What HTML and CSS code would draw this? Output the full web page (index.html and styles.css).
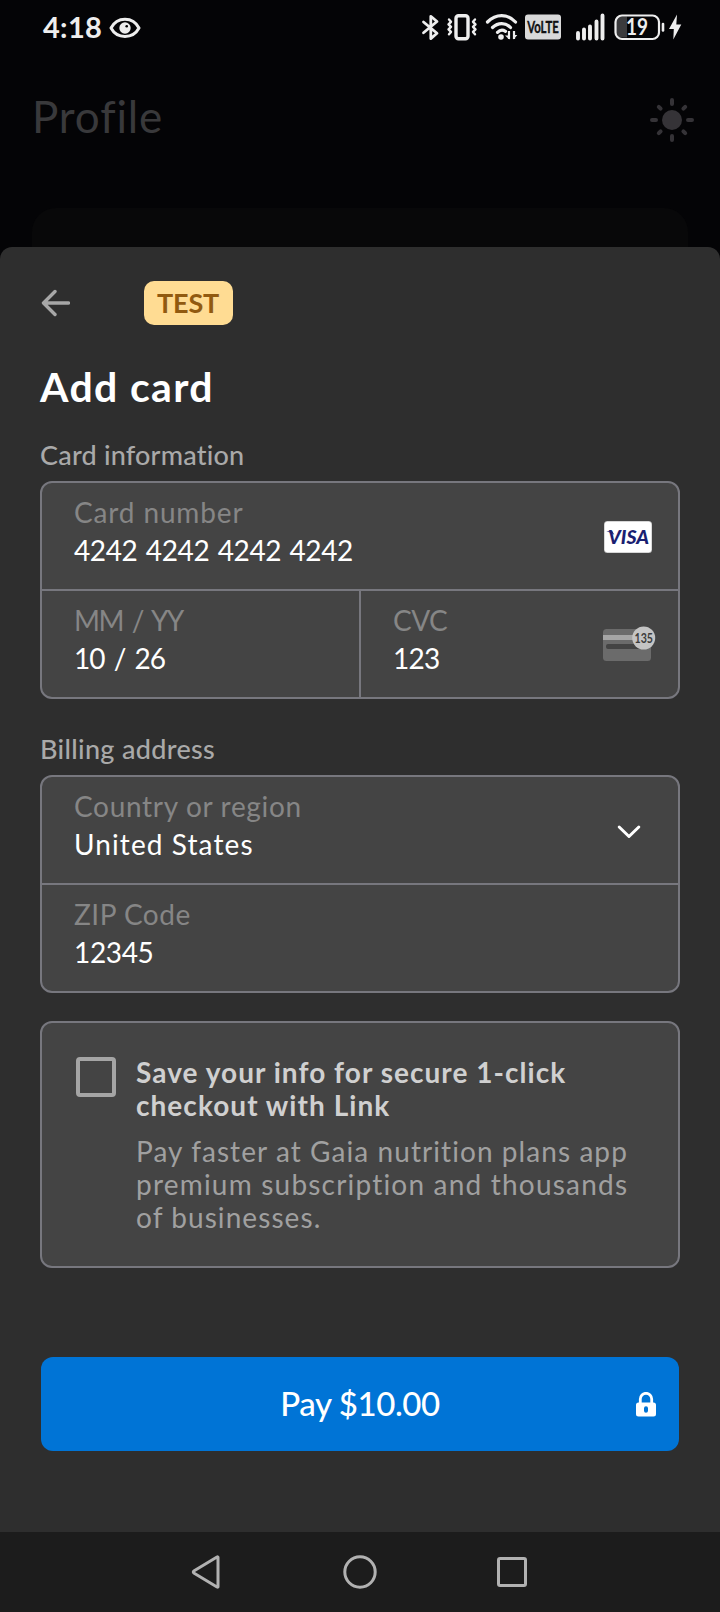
FILE: index.html
```html
<!DOCTYPE html>
<html lang="en">
<head>
<meta charset="utf-8">
<title>Add card</title>
<link rel="stylesheet" href="styles.css">
</head>
<body>
<div class="screen">
  <div class="backdrop">
    <div class="status">
      <span class="clock">4:18</span>
      <svg class="eye" width="32" height="22" viewBox="0 0 32 22"><path d="M2 11C8-.8 24-.8 30 11 24 22.200 8 22.200 2 11Z" fill="none" stroke="#eee" stroke-width="3" stroke-linejoin="round"/><circle cx="16" cy="11" r="5.700" fill="#eee"/><circle cx="17.700" cy="9.300" r="1.300" fill="#040406"/></svg>
      <svg class="indicators" width="290" height="30" viewBox="0 0 290 30">
        <g fill="none" stroke="#eee" stroke-linecap="round" stroke-linejoin="round">
          <path d="M3.500 10 17 21.300 10.800 26.600V4.300L17 9.500 3.500 20.800" stroke-width="2.800"/>
          <rect x="36" y="3.700" width="12" height="23" rx="2.500" stroke-width="3.400"/>
          <path d="M29 7.500l2 2.300-2.500 2.500 2.500 2.600-2.500 2.500 2.500 2.500-2 2.400M55 7.500l-2 2.300 2.500 2.500-2.500 2.600 2.500 2.500-2.500 2.500 2 2.400" stroke-width="2.400"/>
          <path d="M67.500 10c8.500-8.500 20-8.500 28 0M72.500 15.500c5.500-5.300 13-5.300 18 0M77.500 20.300c2.500-2.500 5-2.800 8-1" stroke-width="3.200"/>
        </g>
        <circle cx="81" cy="25" r="2.800" fill="#eee"/>
        <path d="M89 19v8M94 19v8" stroke="#eee" stroke-width="2.200"/>
        <path d="M85 23.500h4.500v4zM93.500 27.500v-4.500h3.800z" fill="#eee"/>
        <rect x="105" y="2.500" width="36" height="25" rx="3" fill="#d9d9d9"/>
        <text x="107.300" y="20.500" class="volte" textLength="31.500" lengthAdjust="spacingAndGlyphs">VoLTE</text>
        <path d="M158 21v5.500M164 17.500v9M170 14.500v12M176.500 9.500v17M182.500 3.500v23" stroke="#eee" stroke-width="3.900" stroke-linecap="round"/>
        <path d="M207 4.500h-6q-5 0-5 5v11q0 5 5 5h6z" fill="#3b3b3d"/>
        <rect x="195.500" y="3.500" width="43.500" height="23.500" rx="6.500" fill="none" stroke="#eee" stroke-width="2.200"/>
        <text x="206" y="22.500" class="charge" textLength="22" lengthAdjust="spacingAndGlyphs">19</text>
        <path d="M243 12v6.500" stroke="#eee" stroke-width="2.600" stroke-linecap="round"/>
        <path d="M257 2.500 249 17h4.800L253.300 27.500 261.300 12.600h-5z" fill="#eee"/>
      </svg>
    </div>
    <div class="profile-bar">
      <span class="profile">Profile</span>
      <svg width="44" height="44" viewBox="0 0 44 44"><circle cx="22" cy="22" r="10" fill="#353337"/><path d="M22 2v4M22 38v4M2 22h4M38 22h4M8.800 8.800l1.800 1.800M33.400 33.400l1.800 1.800M8.800 35.200l1.800-1.800M33.400 10.600l1.800-1.800" stroke="#353337" stroke-width="4" stroke-linecap="round"/></svg>
    </div>
    <div class="dim-card"></div>
  </div>

  <main class="sheet">
    <header class="top">
      <svg width="30" height="28" viewBox="0 0 30 28"><path d="M15 2.500 3.500 14 15 25.500M4 14h24.500" fill="none" stroke="#a7a7a7" stroke-width="3.400" stroke-linecap="round" stroke-linejoin="round"/></svg>
      <span class="badge">TEST</span>
    </header>
    <h1 class="title">Add card</h1>

    <h2 class="section ls-info">Card information</h2>
    <section class="card">
      <div class="field">
        <div class="texts"><span class="label ls-number">Card number</span><span class="value ls-digits">4242 4242 4242 4242</span></div>
        <svg class="brand" width="48" height="32" viewBox="0 0 48 32"><rect width="48" height="32" rx="3.500" fill="#c9c9c9"/><rect x=".7" y=".7" width="46.600" height="30.600" rx="3" fill="#fff"/><text x="4" y="22.700" class="visa" textLength="41" lengthAdjust="spacingAndGlyphs">VISA</text><path d="M2.300 10.200h6l2 3.500-3-1.800z" fill="#1a1f71"/></svg>
      </div>
      <div class="pair">
        <div class="field">
          <div class="texts"><span class="label ls-expiry">MM / YY</span><span class="value ls-date">10 / 26</span></div>
        </div>
        <div class="field">
          <div class="texts"><span class="label ls-cvc">CVC</span><span class="value ls-code">123</span></div>
          <svg class="cvc" width="53" height="36" viewBox="0 0 53 36"><rect y="3" width="48" height="32" rx="3.500" fill="#6b6b6b"/><path d="M0 9h48v5H0z" fill="#a5a5a5"/><rect x="3" y="18" width="38" height="5" rx="2" fill="#444"/><circle cx="40.700" cy="12" r="11.500" fill="#c4c4c4"/><text x="31.500" y="16.600" class="digits" textLength="18.500" lengthAdjust="spacingAndGlyphs">135</text></svg>
        </div>
      </div>
    </section>

    <h2 class="section billing">Billing address</h2>
    <section class="card">
      <div class="field">
        <div class="texts"><span class="label ls-country">Country or region</span><span class="value ls-states">United States</span></div>
        <svg class="chevron" width="24" height="16" viewBox="0 0 24 16"><path d="M2.200 3 12 12.500 21.800 3" fill="none" stroke="#fff" stroke-width="3" stroke-linecap="round" stroke-linejoin="round"/></svg>
      </div>
      <div class="field zip">
        <div class="texts"><span class="label ls-zip">ZIP Code</span><span class="value ls-zipcode">12345</span></div>
      </div>
    </section>

    <section class="card save">
      <span class="checkbox"></span>
      <div class="save-text">
        <p class="strong">Save your info for secure 1-click<br>checkout with Link</p>
        <p class="detail">Pay faster at Gaia nutrition plans app<br><span class="ls-premium">premium subscription and thousands</span><br>of businesses.</p>
      </div>
    </section>

    <button class="pay"><span></span><span class="pay-label">Pay $10.00</span>
      <svg class="lock" width="20" height="25" viewBox="0 0 20 25"><path d="M4.300 12V7a5.700 5.700 0 0 1 11.400 0v5" fill="none" stroke="#fff" stroke-width="2.800"/><path fill-rule="evenodd" d="M2.500 10.500h15Q20 10.500 20 13v9q0 2.500-2.500 2.500h-15Q0 24.500 0 22v-9q0-2.500 2.500-2.500ZM10 14.300a2 2 0 0 0-2 2v2.500a2 2 0 0 0 4 0v-2.500a2 2 0 0 0-2-2Z" fill="#fff"/></svg>
    </button>
  </main>

  <nav class="nav">
    <svg width="30" height="34" viewBox="0 0 30 34"><path d="M27 2.300V31.700Q27 32.500 26 32L2.800 18Q1.800 17 2.800 16L26 2Q27 1.500 27 2.300Z"/></svg>
    <svg class="home" width="34" height="34" viewBox="0 0 34 34"><circle cx="17" cy="17" r="15.200"/></svg>
    <svg class="recent" width="30" height="30" viewBox="0 0 30 30"><rect x="1.500" y="1.500" width="27" height="27" rx="1.500"/></svg>
  </nav>
</div>
</body>
</html>
```
FILE: styles.css
```css
* { box-sizing: border-box; }
body { margin: 0; font-family: Lato, "Open Sans", sans-serif; font-size: 28px; background: #040406; }
svg { display: block; flex: none; }
h1, h2, p { margin: 0; font-weight: 400; }
.screen { width: 720px; height: 1612px; display: flex; flex-direction: column; overflow: hidden; }

.backdrop { height: 247px; flex: none; }
.status { display: flex; align-items: center; height: 54px; padding-left: 43px; }
.clock { font-size: 29px; font-weight: 700; line-height: 54px; letter-spacing: .3px; color: #eee; }
.eye { margin-left: 7px; margin-top: 1px; }
.indicators { margin-left: auto; margin-right: 10px; }
.volte { font: 700 17px Lato, sans-serif; fill: #111; stroke: #111; stroke-width: .4px; }
.charge { font: 700 22px Lato, sans-serif; fill: #eee; }
.profile-bar { display: flex; justify-content: space-between; align-items: center; height: 132px; padding: 0 26px 0 32px; }
.profile { font-size: 44px; line-height: 60px; letter-spacing: .85px; color: #39393b; margin-top: -8px; }
.dim-card { height: 61px; margin: 22px 32px 0; border-radius: 24px 24px 0 0; background: #080809; }

.sheet { flex: none; height: 1285px; padding: 34px 40px 0; background: #2e2e2e; border-radius: 12px 12px 0 0; }
.top { display: flex; align-items: center; height: 44px; }
.badge { margin-left: 74px; width: 89px; height: 44px; padding-left: 13px; border-radius: 10px; background: #ffdc93; color: #915a10; font-size: 27px; font-weight: 700; line-height: 43px; letter-spacing: -.15px; }
.title { margin-top: 37px; font-size: 41px; line-height: 50px; font-weight: 700; letter-spacing: 1.35px; color: #fff; }
.section { margin-top: 26px; font-size: 27px; line-height: 34px; letter-spacing: .32px; font-weight: 500; color: #a9a9a9; }
.billing { margin-top: 33px; }
.card { margin-top: 9px; border: 2px solid #77777e; border-radius: 12px; background: #444; overflow: hidden; }
.field { display: flex; justify-content: space-between; height: 106px; padding: 10px 26px 0 32px; }
.texts { display: flex; flex-direction: column; }
.label, .value { line-height: 38px; white-space: nowrap; }
.label { color: #868686; }
.value { color: #fff; }
.brand { margin-top: 28px; }
.pair { display: grid; grid-template-columns: 319px 1fr; border-top: 2px solid #77777e; }
.pair .field + .field { padding-right: 22px; }
.pair .field:first-child { border-right: 2px solid #77777e; }
.cvc { margin-top: 25px; }
.chevron { margin: 37px 11px 0 0; }
.zip { height: 108px; border-top: 2px solid #77777e; }
.visa { font: italic 900 18px Lato, sans-serif; fill: #1a1f71; }
.digits { font: 700 14px Lato, sans-serif; fill: #3c3c3c; }

.save { display: flex; gap: 20px; height: 247px; margin-top: 28px; padding: 32px 20px 0 34px; }
.checkbox { flex: none; width: 40px; height: 40px; margin-top: 2px; border: 4px solid #a5a5a5; border-radius: 4px; }
.save-text { line-height: 33px; white-space: nowrap; }
.strong { padding-top: 1px; font-weight: 700; letter-spacing: 1.04px; color: #d0d0d0; }
.detail { margin-top: 13px; letter-spacing: 1.07px; color: #a0a0a0; }

.pay { display: grid; grid-template-columns: 1fr auto 1fr; align-items: center; width: 638px; height: 94px; margin: 89px 1px 0; padding: 0 23px; border: 0; border-radius: 12px; background: #0074d6; color: #fff; font: 500 33px/40px Lato, sans-serif; }
.pay-label { margin-top: -3px; letter-spacing: -.42px; }
.lock { justify-self: end; }

.nav { flex: none; display: flex; align-items: center; height: 80px; padding-left: 191px; background: #1c1c1c; }
.nav svg { fill: none; stroke: #b1b1b1; stroke-width: 3px; stroke-linejoin: round; }
.nav .home { margin-left: 122px; }
.nav .recent { margin-left: 120px; }

.ls-info { letter-spacing: .2px; }
.ls-number { letter-spacing: .86px; }
.ls-digits { letter-spacing: -.38px; word-spacing: 1.6px; }
.ls-expiry { letter-spacing: -1.6px; word-spacing: 3.5px; }
.ls-date { letter-spacing: -1px; word-spacing: 3px; }
.ls-cvc { letter-spacing: -.55px; }
.ls-code { letter-spacing: -.74px; }
.ls-country { letter-spacing: .68px; }
.ls-states { letter-spacing: 1.1px; }
.ls-zip { letter-spacing: .5px; }
.ls-zipcode { letter-spacing: -.35px; }
.ls-premium { letter-spacing: 1.2px; }
```
